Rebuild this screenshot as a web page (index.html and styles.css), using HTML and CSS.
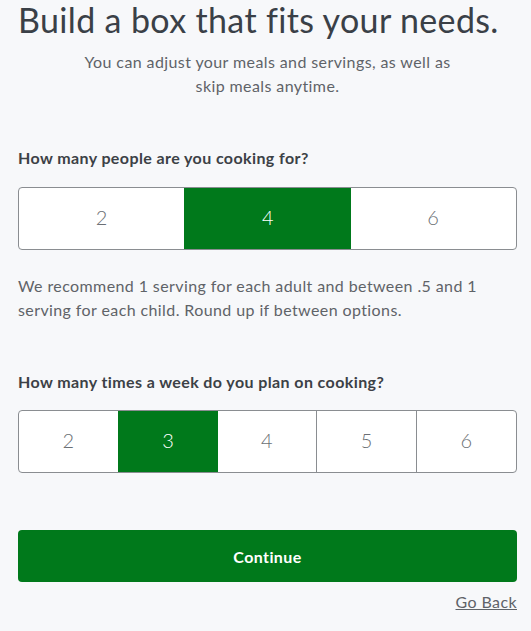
FILE: index.html
```html
<!DOCTYPE html>
<html>
<head lang="en">
    <meta charset="UTF-8">
    <title>Build a box</title>
    <link rel="stylesheet" href="styles.css">
</head>
<body>
<div class="page">
    <h1 class="title">Build a box that fits your needs.</h1>
    <p class="intro">You can adjust your meals and servings, as well as<br>skip meals anytime.</p>

    <div class="question">How many people are you cooking for?</div>
    <div class="choices">
        <span>2</span>
        <span class="on">4</span>
        <span>6</span>
    </div>
    <p class="note">We recommend 1 serving for each adult and between .5 and 1 serving for each child. Round up if between options.</p>

    <div class="question q2">How many times a week do you plan on cooking?</div>
    <div class="choices">
        <span>2</span>
        <span class="on">3</span>
        <span>4</span>
        <span>5</span>
        <span>6</span>
    </div>

    <button class="continue">Continue</button>
    <div class="back"><a href="#">Go Back</a></div>
</div>
</body>
</html>
```

FILE: styles.css
```css
body {
    margin: 0;
    background: #f7f8fa;
    font-family: Lato, "Noto Sans", sans-serif;
    color: #5f6368;
    letter-spacing: 0.4px;
}

.page {
    padding: 0 14px 0 18px;
}

.title {
    margin: 0;
    font-size: 34px;
    line-height: 40px;
    font-weight: 400;
    color: #3a4047;
    letter-spacing: 0.35px;
    white-space: nowrap;
}

.intro {
    margin: 10px 0 0;
    text-align: center;
    font-size: 16px;
    line-height: 24px;
}

.question {
    margin-top: 48px;
    font-size: 16px;
    line-height: 24px;
    font-weight: 700;
    color: #3c4146;
}

.choices {
    display: flex;
    margin-top: 17px;
    height: 63px;
    border: 1px solid #8a8d91;
    border-radius: 4px;
    background: #fff;
    overflow: hidden;
    box-sizing: border-box;
}

.choices > span {
    flex: 1;
    display: flex;
    align-items: center;
    justify-content: center;
    padding-bottom: 4px;
    font-size: 20px;
    font-weight: 300;
    color: #6b6f74;
    border-left: 1px solid #8a8d91;
}

.choices > span:first-child {
    border-left: 0;
}

.choices > span.on {
    background: #00791b;
    color: #fff;
    border-left-color: #00791b;
    margin: -1px 0;
}

.choices > span.on + span {
    border-left: 0;
}

.note {
    margin: 24px 0 0;
    font-size: 16px;
    line-height: 24px;
}

.q2 {
    margin-top: 48px;
}

.q2 + .choices {
    margin-top: 16px;
}

.continue {
    display: block;
    width: 100%;
    margin-top: 57px;
    height: 52px;
    border: 0;
    border-radius: 4px;
    background: #00791b;
    color: #fff;
    font-family: inherit;
    font-size: 16px;
    font-weight: 700;
    letter-spacing: 0.4px;
}

.back {
    margin-top: 8px;
    text-align: right;
    font-size: 16px;
    line-height: 24px;
}

.back a {
    color: #5f6368;
}
```
